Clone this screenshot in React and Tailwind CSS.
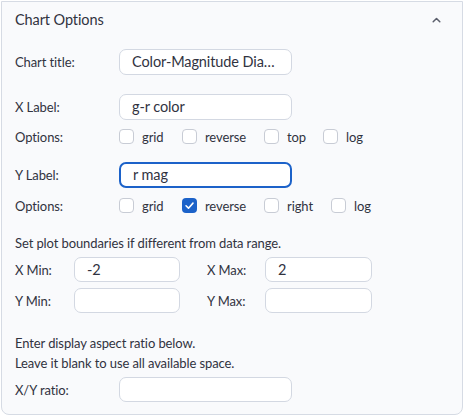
import React from "react";

const font = { fontFamily: "Lato, 'Noto Sans', sans-serif" };

function Check({ checked }) {
  return checked ? (
    <span className="flex h-[15px] w-[15px] shrink-0 items-center justify-center rounded-[4px] bg-[#1c62c9]">
      <svg width="11" height="11" viewBox="0 0 12 12" fill="none">
        <path d="M2.2 6.3 L4.9 8.9 L9.8 3.4" stroke="white" strokeWidth="1.7" strokeLinecap="round" strokeLinejoin="round" />
      </svg>
    </span>
  ) : (
    <span className="h-[15px] w-[15px] shrink-0 rounded-[4px] border border-[#c8ccd5] bg-white" />
  );
}

function Opt({ label, checked, w }) {
  return (
    <div className={`flex items-center gap-[8px] ${w}`}>
      <Check checked={checked} />
      <span className="text-[13px] leading-[16px] tracking-[-0.1px] text-[#31333f]">{label}</span>
    </div>
  );
}

function Input({ value, w, h = "h-[26px]", focus }) {
  return (
    <div
      className={`flex items-center ${w} ${h} rounded-[7px] bg-white pl-[12px] text-[14.5px] tracking-[-0.1px] text-[#31333f] ${
        focus ? "border-2 border-[#1c62c9] pl-[11px]" : "border border-[#d3d8e2]"
      }`}
    >
      <span className="whitespace-nowrap leading-[20px]">{value}</span>
    </div>
  );
}

function Label({ children, w = "w-[104px]" }) {
  return <div className={`${w} shrink-0 text-[13px] leading-[16px] tracking-[-0.1px] text-[#31333f]`}>{children}</div>;
}

export default function App() {
  return (
    <div className="h-[420px] w-[466px] bg-white pl-[1px] pt-[1px]" style={font}>
      <div className="w-[462px] rounded-b-[8px] border border-[#d6dbe4] bg-[#f9fafc] pb-[12px]">
        <div className="flex h-[36px] items-center justify-between pl-[13px] pr-[21px]">
          <span className="text-[14.5px] tracking-[-0.1px] text-[#31333f]">Chart Options</span>
          <svg width="9" height="6" viewBox="0 0 9 6" fill="none">
            <path d="M1.2 4.8 L4.5 1.5 L7.8 4.8" stroke="#5a5e6b" strokeWidth="1.5" strokeLinecap="round" strokeLinejoin="round" />
          </svg>
        </div>
        <div className="pl-[13px]">
          <div className="mt-[11px] flex items-center">
            <Label>Chart title:</Label>
            <Input value="Color-Magnitude Dia…" w="w-[173px]" />
          </div>
          <div className="mt-[19px] flex items-center">
            <Label>X Label:</Label>
            <Input value="g-r color" w="w-[173px]" />
          </div>
          <div className="mt-[9px] flex h-[15px] items-center">
            <Label>Options:</Label>
            <Opt label="grid" w="w-[63px]" />
            <Opt label="reverse" w="w-[82px]" />
            <Opt label="top" w="w-[59px]" />
            <Opt label="log" w="w-[60px]" />
          </div>
          <div className="mt-[18px] flex items-center">
            <Label>Y Label:</Label>
            <Input value="r mag" w="w-[173px]" focus />
          </div>
          <div className="mt-[10px] flex h-[15px] items-center">
            <Label>Options:</Label>
            <Opt label="grid" w="w-[63px]" />
            <Opt label="reverse" checked w="w-[82px]" />
            <Opt label="right" w="w-[67px]" />
            <Opt label="log" w="w-[60px]" />
          </div>
          <div className="mt-[20px] h-[20px] text-[13px] leading-[20px] tracking-[-0.1px] text-[#31333f]">
            Set plot boundaries if different from data range.
          </div>
          <div className="mt-[4px] flex items-center">
            <Label w="w-[59px]">X Min:</Label>
            <Input value="-2" w="w-[106px]" h="h-[25px]" />
            <div className="w-[27px]" />
            <Label w="w-[58px]">X Max:</Label>
            <Input value="2" w="w-[107px]" h="h-[25px]" />
          </div>
          <div className="mt-[6px] flex items-center">
            <Label w="w-[59px]">Y Min:</Label>
            <Input value="" w="w-[106px]" h="h-[25px]" />
            <div className="w-[27px]" />
            <Label w="w-[58px]">Y Max:</Label>
            <Input value="" w="w-[107px]" h="h-[25px]" />
          </div>
          <div className="mt-[20px] text-[13px] leading-[20px] tracking-[-0.1px] text-[#31333f]">
            <div>Enter display aspect ratio below.</div>
            <div>Leave it blank to use all available space.</div>
          </div>
          <div className="mt-[4px] flex items-center">
            <Label>X/Y ratio:</Label>
            <Input value="" w="w-[173px]" h="h-[25px]" />
          </div>
        </div>
      </div>
    </div>
  );
}
